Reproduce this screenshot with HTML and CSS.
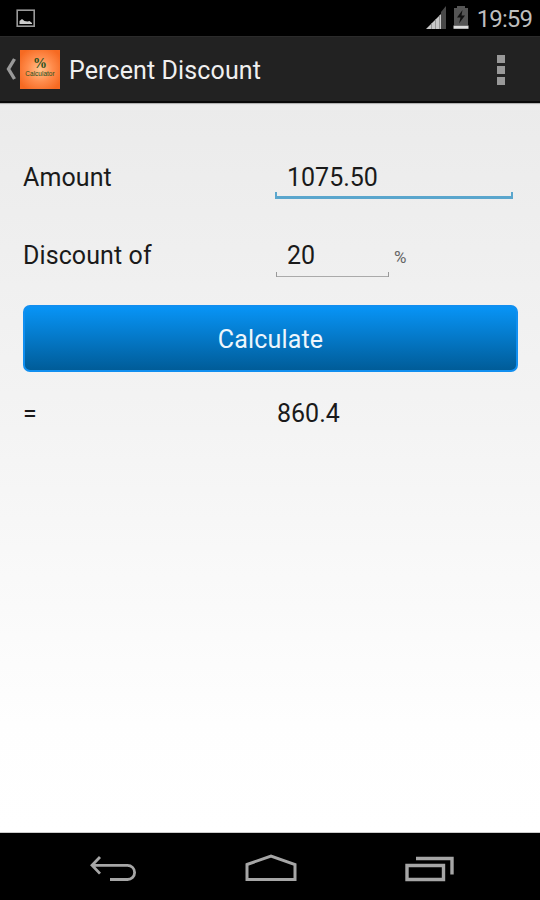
FILE: index.html
```html
<!DOCTYPE html>
<html lang="en">
<head>
<meta charset="utf-8">
<meta name="viewport" content="width=device-width,initial-scale=1">
<title>Percent Discount</title>
<link rel="stylesheet" href="styles.css">
</head>
<body>
<div class="status">
<svg class="picture" width="20" height="19" viewBox="0 0 20 19">
<rect x="1.2" y="1.2" width="17" height="16" fill="none" stroke="#999" stroke-width="1.6"/>
<path d="M3.5 15V12L6 10l2.5 2 3 .5 2-.5 2.5 2V15z" fill="#ccc"/>
</svg>
<svg class="signal" width="20" height="23" viewBox="0 0 20 23">
<path d="M0 23L15 8V23z" fill="#c8c8c8"/>
<path d="M15 6L20 0V23H15z" fill="#484848"/>
<path d="M5.5 17V23M9.5 13V23M13.5 9V23" stroke="#888" stroke-width=".8"/>
</svg>
<svg class="battery" width="16" height="23" viewBox="0 0 16 23">
<path d="M4 0H12V2H15V19H1V2H4z" fill="#555"/>
<path d="M9.5 4L4 11.5H7.5L6 17.5 12 9.5H8.5z" fill="#111"/>
<path d="M.5 19.5H15.5V22.8H.5z" fill="#ddd"/>
</svg>
<span class="clock">19:59</span>
</div>
<div class="actionbar">
<svg class="up" width="12" height="24" viewBox="0 0 12 24">
<path d="M9.5 2L3.5 12 9.5 22" fill="none" stroke="#999" stroke-width="3.4"/>
</svg>
<div class="logo"><b>%</b><i>Calculator</i></div>
<div class="title">Percent Discount</div>
<div class="more"><span></span><span></span><span></span></div>
</div>
<form class="content" onsubmit="return false">
<div class="row">
<label for="amount">Amount</label>
<div class="field focused"><input type="text" id="amount" value="1075.50"></div>
</div>
<div class="row">
<label for="discount">Discount of</label>
<div class="field short"><input type="text" id="discount" value="20"></div>
<span class="unit">%</span>
</div>
<button type="button" class="calculate">Calculate</button>
<div class="row result">
<span class="equals">=</span>
<span>860.4</span>
</div>
</form>
<div class="navbar">
<svg width="48" height="32" viewBox="0 0 48 32">
<path d="M11 4L3 12.3 11 20.6M3 12.3H38.5A7 7 0 0 1 38.5 26.5H21" fill="none" stroke="#a6a6a6" stroke-width="2.8"/>
</svg>
<svg width="52" height="32" viewBox="0 0 52 32">
<path d="M2 11.5L26 3 50 11.5V26.5H2z" fill="none" stroke="#a6a6a6" stroke-width="3"/>
</svg>
<svg width="50" height="32" viewBox="0 0 50 32">
<path d="M2 12.5H38.5V26.5H2zM11 5.5H47V21.5" fill="none" stroke="#a6a6a6" stroke-width="3.4"/>
</svg>
</div>
</body>
</html>
```
FILE: styles.css
```css
html, body {
    height: 100%;
}

body {
    display: flex;
    flex-direction: column;
    margin: 0;
    overflow: hidden;
    background: #000;
    color: #1a1a1a;
    font: 25px/30px Roboto, sans-serif;
}

.status {
    display: flex;
    align-items: flex-start;
    box-sizing: border-box;
    height: 36px;
    padding: 5px 8px 0 16px;
}

.picture {
    margin-top: 4px;
}

.signal {
    margin: 1px 7px 0 auto;
}

.battery {
    margin-top: 1px;
}

.clock {
    margin-left: 8px;
    line-height: 28px;
    font-size: 24px;
    letter-spacing: -0.9px;
    color: #bebebe;
}

.actionbar {
    display: flex;
    align-items: center;
    box-sizing: border-box;
    height: 67px;
    padding: 0 35px 0 5px;
    background: #222;
    border-top: 1px solid #2b2b2b;
    border-bottom: 2px solid #080808;
}

.up {
    margin-right: 3px;
}

.logo {
    display: flex;
    flex-direction: column;
    align-items: center;
    box-sizing: border-box;
    width: 40px;
    height: 39px;
    padding-top: 7px;
    background: radial-gradient(circle, #ffc590 0%, #ff8c4c 45%, #f66a22 85%);
    color: #26501c;
}

.logo b {
    font: bold 14px/13px "Liberation Serif", serif;
}

.logo i {
    font: 6.5px/7px "Liberation Sans", sans-serif;
}

.title {
    flex: 1;
    margin-left: 9px;
    padding-top: 4px;
    letter-spacing: 0.12px;
    color: #f0f0f0;
    white-space: nowrap;
}

.more {
    display: grid;
    gap: 3px;
    padding-top: 2px;
}

.more span {
    width: 8px;
    height: 8px;
    background: #999;
}

.content {
    flex: 1;
    padding: 42px 23px 0;
    background: linear-gradient(#ebebeb, #f4f4f4 45%, #fefefe 85%, #fff);
    box-shadow: inset 0 2px 1px -1px #aaa, inset 0 -1px #ccc;
}

.row {
    display: flex;
    align-items: center;
    height: 63px;
    margin-bottom: 15px;
}

.row label {
    width: 252px;
    padding-top: 2px;
    letter-spacing: 0.1px;
}

/* underline with short upturned ends */
.field {
    box-sizing: border-box;
    width: 238px;
    height: 44px;
    padding: 0 12px;
    background:
        linear-gradient(#999, #999) 1px 100% / 1px 5px no-repeat,
        linear-gradient(#999, #999) 100% 100% / 1px 5px no-repeat,
        linear-gradient(#aaa, #aaa) 1px 100% / 100% 1px no-repeat;
}

.focused {
    background:
        linear-gradient(#5aa6cd, #5aa6cd) 0 100% / 2px 7px no-repeat,
        linear-gradient(#5aa6cd, #5aa6cd) 100% 100% / 2px 7px no-repeat,
        linear-gradient(#5aa6cd, #5aa6cd) 0 100% / 100% 3px no-repeat;
}

.field input {
    display: block;
    box-sizing: border-box;
    width: 100%;
    height: 44px;
    padding: 2px 0 0;
    border: 0;
    outline: 0;
    background: none;
    color: inherit;
    font: inherit;
}

.short {
    width: 114px;
}

.unit {
    margin: 4px 0 0 5px;
    font-size: 17px;
    color: #666;
}

.calculate {
    display: block;
    width: 495px;
    height: 67px;
    margin-top: 19px;
    padding: 2px 0 0;
    border: 2px solid #118ff0;
    border-radius: 7px;
    background: linear-gradient(#0894f6, #005c98);
    color: #eef6fc;
    font: inherit;
    letter-spacing: 0.15px;
}

.result {
    height: 84px;
    margin: 0;
}

.equals {
    width: 254px;
}

.navbar {
    display: flex;
    box-sizing: border-box;
    height: 67px;
    padding: 20px 85px 0 89px;
    justify-content: space-between;
}
```
